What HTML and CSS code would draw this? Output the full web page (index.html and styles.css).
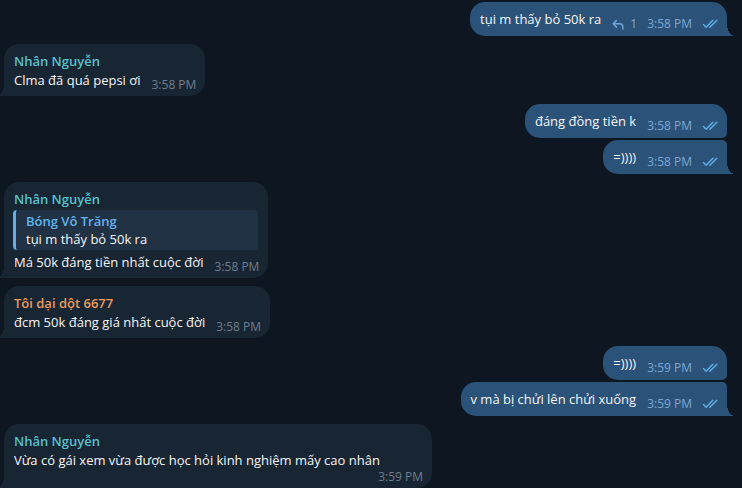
FILE: index.html
```html
<!DOCTYPE html>
<html lang="vi">
<head>
<meta charset="utf-8">
<title>Chat</title>
<link rel="stylesheet" href="styles.css">
</head>
<body>
<div class="chat">
  <div class="msg out tail">
    <div class="row">
      <div class="text">tụi m thấy bỏ 50k ra</div>
      <div class="meta">
        <svg class="reply-ico" width="12" height="11" viewBox="0 0 12 11"><path d="M4.5 1.5 L1.2 4.8 L4.5 8.1 M1.5 4.8 H7.5 Q10.8 4.8 10.8 8.1 V10" fill="none" stroke="#6fa6d8" stroke-width="1.5" stroke-linecap="round" stroke-linejoin="round"/></svg>
        <span class="replies">1</span>
        <span class="time">3:58 PM</span>
        <svg class="checks" width="18" height="10" viewBox="0 0 18 10"><path d="M1.5 5.5 L4.2 8.3 L10.8 1.2 M7.8 8.3 L14.8 1.2" fill="none" stroke="#62b1ea" stroke-width="1.4" stroke-linecap="round" stroke-linejoin="round"/></svg>
      </div>
    </div>
  </div>

  <div class="msg in tail group">
    <div class="name teal">Nhân Nguyễn</div>
    <div class="row">
      <div class="text">Clma đã quá pepsi ơi</div>
      <div class="meta"><span class="time">3:58 PM</span></div>
    </div>
  </div>

  <div class="msg out first group">
    <div class="row">
      <div class="text">đáng đồng tiền k</div>
      <div class="meta">
        <span class="time">3:58 PM</span>
        <svg class="checks" width="18" height="10" viewBox="0 0 18 10"><path d="M1.5 5.5 L4.2 8.3 L10.8 1.2 M7.8 8.3 L14.8 1.2" fill="none" stroke="#62b1ea" stroke-width="1.4" stroke-linecap="round" stroke-linejoin="round"/></svg>
      </div>
    </div>
  </div>

  <div class="msg out tail next">
    <div class="row">
      <div class="text">=))))</div>
      <div class="meta">
        <span class="time">3:58 PM</span>
        <svg class="checks" width="18" height="10" viewBox="0 0 18 10"><path d="M1.5 5.5 L4.2 8.3 L10.8 1.2 M7.8 8.3 L14.8 1.2" fill="none" stroke="#62b1ea" stroke-width="1.4" stroke-linecap="round" stroke-linejoin="round"/></svg>
      </div>
    </div>
  </div>

  <div class="msg in tail group">
    <div class="name teal">Nhân Nguyễn</div>
    <div class="quote">
      <div class="quote-name">Bóng Vô Trăng</div>
      <div class="quote-text">tụi m thấy bỏ 50k ra</div>
    </div>
    <div class="row">
      <div class="text">Má 50k đáng tiền nhất cuộc đời</div>
      <div class="meta"><span class="time">3:58 PM</span></div>
    </div>
  </div>

  <div class="msg in tail group">
    <div class="name orange">Tôi dại dột 6677</div>
    <div class="row">
      <div class="text">đcm 50k đáng giá nhất cuộc đời</div>
      <div class="meta"><span class="time">3:58 PM</span></div>
    </div>
  </div>

  <div class="msg out first group">
    <div class="row">
      <div class="text">=))))</div>
      <div class="meta">
        <span class="time">3:59 PM</span>
        <svg class="checks" width="18" height="10" viewBox="0 0 18 10"><path d="M1.5 5.5 L4.2 8.3 L10.8 1.2 M7.8 8.3 L14.8 1.2" fill="none" stroke="#62b1ea" stroke-width="1.4" stroke-linecap="round" stroke-linejoin="round"/></svg>
      </div>
    </div>
  </div>

  <div class="msg out tail next">
    <div class="row">
      <div class="text">v mà bị chửi lên chửi xuống</div>
      <div class="meta">
        <span class="time">3:59 PM</span>
        <svg class="checks" width="18" height="10" viewBox="0 0 18 10"><path d="M1.5 5.5 L4.2 8.3 L10.8 1.2 M7.8 8.3 L14.8 1.2" fill="none" stroke="#62b1ea" stroke-width="1.4" stroke-linecap="round" stroke-linejoin="round"/></svg>
      </div>
    </div>
  </div>

  <div class="msg in tail group">
    <div class="name teal">Nhân Nguyễn</div>
    <div class="row">
      <div class="text">Vừa có gái xem vừa được học hỏi kinh nghiệm mấy cao nhân</div>
      <div class="meta"><span class="time">3:59 PM</span></div>
    </div>
  </div>
</div>
</body>
</html>
```
FILE: styles.css
```css
* { box-sizing: border-box; }

html, body {
  margin: 0;
  padding: 0;
  background: #0e1621;
  height: 100%;
  overflow: hidden;
}

body {
  font-family: "Open Sans", "Noto Sans", sans-serif;
  font-size: 13px;
  line-height: 18px;
  color: #f5f5f5;
}

.chat {
  display: flex;
  flex-direction: column;
  gap: 2px;
  padding: 2px 15px 0 4px;
}

.msg {
  position: relative;
  max-width: 428px;
  border-radius: 15px;
  padding: 8px 9px 8px 10px;
  display: flex;
  flex-direction: column;
}

.msg.group { margin-top: 6px; }

.msg.in {
  align-self: flex-start;
  background: #182533;
  padding-top: 8px;
  padding-bottom: 7px;
}

.msg.out {
  align-self: flex-end;
  background: #2b5278;
  padding-right: 6px;
}

.msg.out.first { border-bottom-right-radius: 5px; }
.msg.out.next { border-top-right-radius: 5px; }

.msg.out.tail { border-bottom-right-radius: 0; }
.msg.in.tail { border-bottom-left-radius: 0; }

.msg.out.tail::after {
  content: "";
  position: absolute;
  right: -8px;
  bottom: 0;
  width: 8px;
  height: 12px;
  background: radial-gradient(ellipse 8px 12px at 100% 0, transparent 98%, #2b5278 100%);
}

.msg.in.tail::after {
  content: "";
  position: absolute;
  left: -8px;
  bottom: 0;
  width: 8px;
  height: 12px;
  background: radial-gradient(ellipse 8px 12px at 0 0, transparent 98%, #182533 100%);
}

.row {
  display: flex;
  flex-wrap: wrap;
  align-items: flex-end;
}

.text { white-space: nowrap; }

.meta {
  display: flex;
  align-items: center;
  margin-left: auto;
  padding-left: 11px;
  margin-bottom: -4px;
  font-size: 12px;
  line-height: 16px;
  white-space: nowrap;
}

.in .time { color: #6d7f8f; }
.out .time { color: #7da8d3; }

.reply-ico { margin-right: 6px; }
.replies { color: #7da8d3; margin-right: 10px; }

.checks { margin-left: 10px; margin-right: 1px; }

.name {
  font-weight: 600;
  line-height: 18px;
  margin-bottom: 1px;
}
.name.teal { color: #57c2cf; }
.name.orange { color: #eb9b5c; }

.quote {
  margin: 1px 1px 3px -1px;
  padding: 2px 8px 2px 10px;
  border-left: 3px solid #5eaef0;
  border-radius: 4px;
  background: #213245;
}
.quote-name { color: #62b3f0; font-weight: 600; }
.quote-text { color: #f5f5f5; }
```
